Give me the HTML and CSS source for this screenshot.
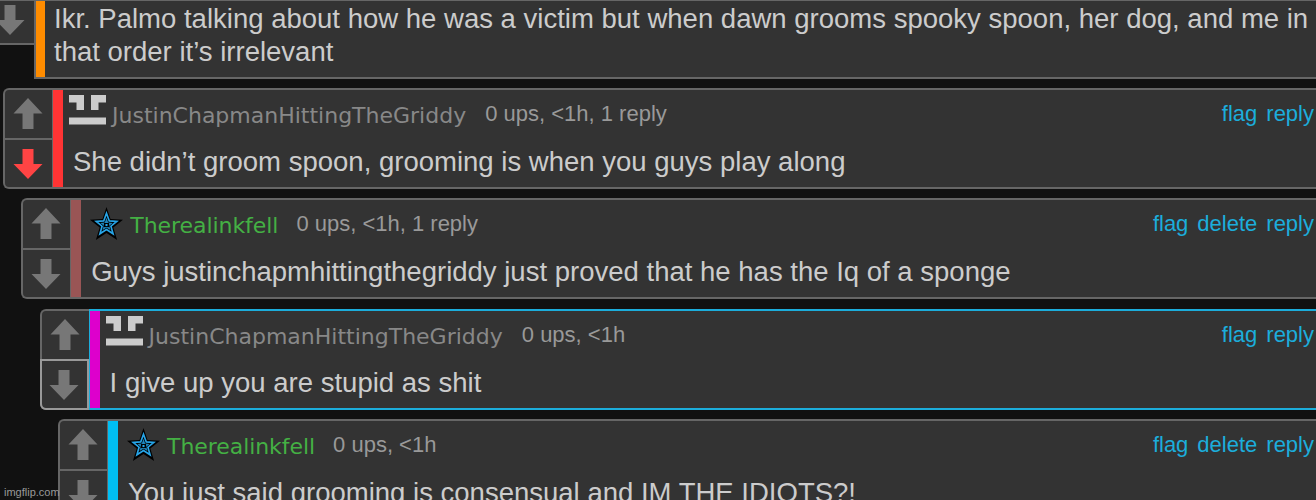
FILE: index.html
```
<!DOCTYPE html>
<html lang="en">
<head>
  <meta charset="UTF-8">
  <title>Comments</title>
  <link rel="stylesheet" href="styles.css">
</head>
<body>
  <svg class="defs" width="0" height="0">
    <symbol id="arrow" viewBox="0 0 30 31" preserveAspectRatio="none">
      <path d="M15 0 L29.5 15.5 H20.5 V31 H9.5 V15.5 H.5 Z"/>
    </symbol>
    <symbol id="face" viewBox="0 0 37 30">
      <path fill="#ccc" d="M0 0H15V15H7.5V7.5H0ZM22 0H37V7.5H29.5V15H22ZM0 22.5H37V29.5H0Z"/>
    </symbol>
    <symbol id="star" viewBox="0 0 32 32">
      <path fill="#000" d="M16 0L19.9 11.6L32 12.3L22.6 19.8L26.3 32L16 25.2L5.7 32L9.4 19.8L0 12.3L12.1 11.6Z"/>
      <path fill="none" stroke="#27a5e8" stroke-width="1.6" d="M16 6L18.7 13.5L26 14L20.3 18.6L22.4 26L16 21.9L9.6 26L11.7 18.6L6 14L13.3 13.5Z"/>
      <path fill="#1e86bd" d="M16 10.5L17.6 15L22 15.4L18.6 18.2L19.8 22.3L16 20L12.2 22.3L13.4 18.2L10 15.4L14.4 15Z"/>
      <path fill="#000" d="M13.5 15.5H18.5V19.5H13.5Z"/>
      <path fill="#27a5e8" d="M15 16.5H17V18.5H15Z"/>
    </symbol>
  </svg>

  <div class="comments">
    <div class="comment first">
      <div class="votes">
        <div class="vote"></div>
        <div class="vote"><svg class="arrow down"><use href="#arrow"/></svg></div>
      </div>
      <div class="post">
        <div class="bar orange"></div>
        <div class="content">
          <div class="text">Ikr. Palmo talking about how he was a victim but when dawn grooms spooky spoon, her dog, and me in<br>that order it’s irrelevant</div>
        </div>
      </div>
    </div>

    <div class="comment">
      <div class="votes">
        <div class="vote"><svg class="arrow"><use href="#arrow"/></svg></div>
        <div class="vote"><svg class="arrow down voted"><use href="#arrow"/></svg></div>
      </div>
      <div class="post">
        <div class="bar red"></div>
        <div class="content">
          <div class="head">
            <svg class="icon face"><use href="#face"/></svg>
            <span class="user">JustinChapmanHittingTheGriddy</span>
            <span class="meta">0 ups, &lt;1h, 1 reply</span>
            <div class="links"><a>flag</a><a>reply</a></div>
          </div>
          <div class="text">She didn’t groom spoon, grooming is when you guys play along</div>
        </div>
      </div>
    </div>

    <div class="comment level1">
      <div class="votes">
        <div class="vote"><svg class="arrow"><use href="#arrow"/></svg></div>
        <div class="vote"><svg class="arrow down"><use href="#arrow"/></svg></div>
      </div>
      <div class="post">
        <div class="bar brown"></div>
        <div class="content">
          <div class="head">
            <svg class="icon star"><use href="#star"/></svg>
            <span class="user green">Therealinkfell</span>
            <span class="meta">0 ups, &lt;1h, 1 reply</span>
            <div class="links"><a>flag</a><a>delete</a><a>reply</a></div>
          </div>
          <div class="text">Guys justinchapmhittingthegriddy just proved that he has the Iq of a sponge</div>
        </div>
      </div>
    </div>

    <div class="comment level2 selected">
      <div class="votes">
        <div class="vote"><svg class="arrow"><use href="#arrow"/></svg></div>
        <div class="vote"><svg class="arrow down"><use href="#arrow"/></svg></div>
      </div>
      <div class="post">
        <div class="bar magenta"></div>
        <div class="content">
          <div class="head">
            <svg class="icon face"><use href="#face"/></svg>
            <span class="user">JustinChapmanHittingTheGriddy</span>
            <span class="meta">0 ups, &lt;1h</span>
            <div class="links"><a>flag</a><a>reply</a></div>
          </div>
          <div class="text">I give up you are stupid as shit</div>
        </div>
      </div>
    </div>

    <div class="comment level3">
      <div class="votes">
        <div class="vote"><svg class="arrow"><use href="#arrow"/></svg></div>
        <div class="vote"><svg class="arrow down"><use href="#arrow"/></svg></div>
      </div>
      <div class="post">
        <div class="bar blue"></div>
        <div class="content">
          <div class="head">
            <svg class="icon star"><use href="#star"/></svg>
            <span class="user green">Therealinkfell</span>
            <span class="meta">0 ups, &lt;1h</span>
            <div class="links"><a>flag</a><a>delete</a><a>reply</a></div>
          </div>
          <div class="text">You just said grooming is consensual and IM THE IDIOTS?!</div>
        </div>
      </div>
    </div>
  </div>
  <div class="watermark">imgflip.com</div>
</body>
</html>
```
FILE: styles.css
```
* {
  box-sizing: border-box;
}
body {
  margin: 0;
  height: 500px;
  overflow: hidden;
  background: #111;
  color: #ccc;
  font-family: "Liberation Sans", Arial, sans-serif;
}
.defs {
  display: block;
}
.comments {
  height: 500px;
  overflow: hidden;
}
.comment {
  display: flex;
  height: 101px;
  margin: 0 0 9.3px 3px;
}
.level1 { margin-left: 21.3px; }
.level2 { margin-left: 39.6px; }
.level3 { margin-left: 58px; }

.votes {
  flex: none;
  width: 49px;
  height: 101px;
  border: 2px solid #666;
  border-right: 0;
  border-radius: 6px 0 0 6px;
  background: #333;
}
.vote {
  display: flex;
  justify-content: center;
  height: 48px;
  padding: 8px 1px 0 0;
}
.vote + .vote {
  height: 49px;
  padding-top: 9px;
  border-top: 2px solid #666;
}
.arrow {
  flex: none;
  width: 30px;
  height: 31px;
  fill: #777;
}
.down {
  height: 30px;
  transform: scaleY(-1);
}
.voted {
  fill: #ff4444;
}
.post {
  display: flex;
  flex: 1;
  border: 2px solid #666;
  border-right: 0;
  border-left-width: 1px;
  background: #333;
}
.bar {
  flex: none;
  width: 10px;
}
.orange { background: #ff8c00; }
.red { background: #ff3434; }
.brown { background: #995555; }
.magenta { background: #dd00cc; }
.blue { background: #00bff3; }

.content {
  flex: 1;
  min-width: 0;
}
.head {
  display: flex;
  height: 55px;
  padding: 0 2px 0 6px;
  line-height: 26px;
  white-space: nowrap;
}
.icon {
  flex: none;
  width: 37px;
  height: 30px;
  margin-top: 5px;
}
.star {
  height: 33px;
  margin: 7px -1px 0 1px;
}
.user {
  margin: 13px 19px 0 6px;
  color: #888;
  font-family: "DejaVu Sans", Verdana, sans-serif;
  font-size: 22px;
}
.green {
  margin-right: 18px;
  color: #44b044;
  letter-spacing: -0.06px;
}
.meta {
  margin-top: 11px;
  color: #999;
  font-size: 22px;
}
.links {
  display: flex;
  gap: 9px;
  margin: 11px 0 0 auto;
  color: #1caddb;
  font-size: 22px;
}
.text {
  padding-left: 10px;
  font-size: 27.53px;
  line-height: 33px;
  white-space: nowrap;
}

.first {
  height: 79px;
  margin: 0 0 9px;
}
.first .votes {
  width: 34px;
  height: 45px;
  border-left: 0;
  border-top-width: 1px;
  border-radius: 0;
}
.first .vote {
  height: 0;
  padding: 0;
}
.first .vote + .vote {
  height: 42px;
  padding: 4px 14px 0 0;
  border: 0;
}
.first .post {
  border-top-width: 1px;
  border-left-width: 2px;
}
.first .bar {
  width: 9px;
}
.first .text {
  padding: 1px 0 0 9px;
}
.selected .post {
  border-color: #1caddb;
}
.selected .vote + .vote {
  margin: 0 0 0 -2px;
  height: 51px;
  border: 2px solid #999;
  border-radius: 0 0 0 6px;
}
.watermark {
  position: absolute;
  left: 4px;
  bottom: 2px;
  color: #999;
  font-size: 11px;
}
```
